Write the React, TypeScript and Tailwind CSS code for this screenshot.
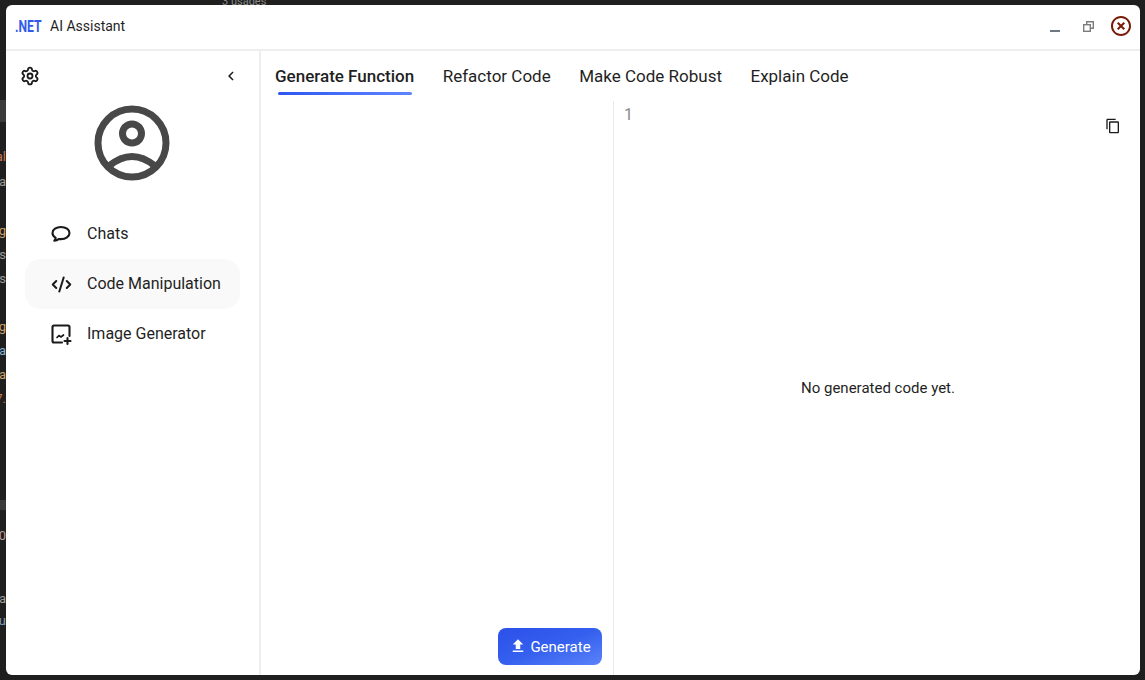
import React from 'react';
import { Settings, CodeXml } from 'lucide-react';
import { MdChevronLeft, MdFileUpload, MdContentCopy, MdHighlightOff } from 'react-icons/md';

const tabs = ['Generate Function', 'Refactor Code', 'Make Code Robust', 'Explain Code'];

// editor text that shows behind the window on the left edge
const behindLeft = [
  { y: 148, t: 'al', c: 'text-[#c9764f]' },
  { y: 173, t: 'ta', c: 'text-[#9a9a9a]' },
  { y: 222, t: 'g', c: 'text-[#c9a26a]' },
  { y: 246, t: 's', c: 'text-[#9a9a9a]' },
  { y: 270, t: 'cs', c: 'text-[#9a9a9a]' },
  { y: 318, t: 'g', c: 'text-[#c9a26a]' },
  { y: 342, t: 'a', c: 'text-[#7fb0d8]' },
  { y: 366, t: 'ta', c: 'text-[#c9a26a]' },
  { y: 390, t: '7.', c: 'text-[#c9764f]' },
  { y: 527, t: '0', c: 'text-[#b9a0a0]' },
  { y: 590, t: 'a', c: 'text-[#9a9a9a]' },
  { y: 612, t: 'u', c: 'text-[#7fa0c8]' },
];

function AvatarIcon() {
  return (
    <svg width="90" height="90" viewBox="0 0 90 90" fill="none" stroke="#484848" strokeWidth="7">
      <circle cx="45" cy="45" r="34" />
      <circle cx="45" cy="35.500" r="9.500" />
      <path d="M22 68Q45 49 68 68" />
    </svg>
  );
}

function ChatIcon() {
  return (
    <svg width="24" height="24" viewBox="0 0 24 24" fill="none" stroke="currentColor" strokeWidth="2.100" strokeLinejoin="round">
      <path d="M12 5c-4.700 0-8.500 2.600-8.500 6 0 2 1.200 3.700 3.200 4.800 0 1-.5 2-1.400 2.900 1.900 0 3.400-.6 4.500-1.700.7.100 1.400.1 2.200.1 4.700 0 8.500-2.700 8.500-6.100S16.700 5 12 5z" />
    </svg>
  );
}

function ImageAddIcon() {
  return (
    <svg width="24" height="24" viewBox="0 0 24 24" fill="none" stroke="currentColor" strokeWidth="2.100" strokeLinecap="round">
      <path d="M13 20.500H5a1.500 1.500 0 0 1-1.500-1.500V5A1.500 1.500 0 0 1 5 3.500h14A1.500 1.500 0 0 1 20.500 5v9" />
      <path d="M8 15.500l2-2 2 1.500 2.500-2" strokeWidth="1.700" />
      <path d="M18.500 16v6M15.500 19h6" />
    </svg>
  );
}

function RestoreIcon() {
  return (
    <svg width="11" height="11" viewBox="0 0 11 11" fill="none" stroke="#7d7d7d" strokeWidth="1.400">
      <rect x="0.700" y="3.700" width="6.600" height="6.600" />
      <path d="M3.700 3.500V0.700h6.600v6.600H7.500" />
    </svg>
  );
}

function NavItem({ label, icon, active }: { label: string; icon: React.ReactNode; active?: boolean }) {
  return (
    <div className={`flex items-center h-[50px] rounded-2xl pl-[24px] ${active ? 'bg-[#f9f9f9]' : ''}`}>
      <span className="w-[24px] h-[24px] mr-[14px] text-[#1a1a1a] flex items-center justify-center">{icon}</span>
      <span className="text-[16px] text-[#1f1f1f]">{label}</span>
    </div>
  );
}

export default function App() {
  return (
    <div className="relative w-[1145px] h-[680px] overflow-hidden bg-[#1f1f1f] pt-[5px] pl-[6px] pr-[5px] pb-[5px] font-['Roboto',sans-serif]">
      <div className="absolute left-0 top-[100px] w-[6px] h-[22px] bg-[#3a3a3a]" />
      <div className="absolute left-0 top-[500px] w-[6px] h-[10px] bg-[#3a3a3a]" />
      {behindLeft.map((b) => (
        <span key={b.y} style={{ top: b.y }} className={`absolute right-[1139px] text-[13px] leading-[18px] whitespace-nowrap ${b.c}`}>
          {b.t}
        </span>
      ))}
      <span className="absolute left-[222px] -top-[5px] text-[11px] leading-[13px] text-[#8a8a8a]">3 usages</span>

      <div className="relative w-full h-full bg-white rounded-[6px] flex flex-col overflow-hidden">
        {/* title bar */}
        <div className="h-[46px] shrink-0 flex items-center border-b-2 border-[#eeeeee]">
          <span className="ml-[9px] w-[34px] text-[16px] font-bold text-[#2f5be8] scale-x-[0.76] origin-left -mt-[1px]">.NET</span>
          <span className="text-[14px] text-[#1f1f1f] ml-[1px] -mt-[1px]">AI Assistant</span>
          <div className="ml-auto flex items-center">
            <div className="w-[10px] h-[2px] bg-[#6f7780] mr-[23px] mt-[8px]" />
            <span className="mr-[15px] -mt-[1px]"><RestoreIcon /></span>
            <MdHighlightOff size={24} className="text-[#7a1a08] mr-[7px] -mt-[2px]" />
          </div>
        </div>

        <div className="flex-1 flex min-h-0">
          {/* sidebar */}
          <div className="w-[255px] shrink-0 border-r-2 border-[#eeeeee] flex flex-col">
            <div className="h-[50px] flex items-center justify-between pl-[14px] pr-[19px]">
              <Settings size={20} strokeWidth={2.200} className="text-[#1a1a1a]" />
              <MdChevronLeft size={18} className="text-[#1a1a1a]" />
            </div>
            <div className="flex justify-center -mt-[3px] pr-[2px]">
              <AvatarIcon />
            </div>
            <div className="mt-[21px] ml-[19px] mr-[19px] flex flex-col">
              <NavItem label="Chats" icon={<ChatIcon />} />
              <NavItem label="Code Manipulation" icon={<CodeXml size={21} strokeWidth={2.300} />} active />
              <NavItem label="Image Generator" icon={<ImageAddIcon />} />
            </div>
          </div>

          {/* main */}
          <div className="flex-1 min-w-0 flex flex-col">
            <div className="h-[50px] shrink-0 flex items-start pt-[14px] pl-[14px] gap-[28.5px]">
              {tabs.map((t, i) => (
                <div key={t} className="relative">
                  <span className={`text-[17px] leading-[22px] text-[#1f1f1f] ${i === 0 ? 'font-medium' : ''}`}>{t}</span>
                  {i === 0 && (
                    <div className="absolute left-[3px] right-[2px] top-[27px] h-[3px] rounded-full bg-gradient-to-r from-[#2f55f0] to-[#5f85ff]" />
                  )}
                </div>
              ))}
            </div>
            <div className="flex-1 flex min-h-0">
              <div className="w-[353px] shrink-0 border-r border-[#eaeaea] flex flex-col justify-end items-end pr-[11px] pb-[10px]">
                <button className="w-[104px] h-[37px] rounded-lg bg-gradient-to-br from-[#2c50ea] via-[#3560ee] to-[#5b82fa] text-white text-[15px] flex items-center justify-center gap-[3px]">
                  <MdFileUpload size={18} className="-mt-[2px]" />
                  <span className="mt-[1px]">Generate</span>
                </button>
              </div>
              <div className="relative flex-1 min-w-0 flex items-center justify-center">
                <span className="absolute left-[10px] top-[5px] text-[16px] leading-[18px] text-[#8a8a8a]">1</span>
                <MdContentCopy size={16} className="absolute right-[19px] top-[17px] text-[#1a1a1a]" />
                <span className="text-[15px] text-[#1f1f1f] mt-[1px] ml-[2px]">No generated code yet.</span>
              </div>
            </div>
          </div>
        </div>
      </div>
    </div>
  );
}
